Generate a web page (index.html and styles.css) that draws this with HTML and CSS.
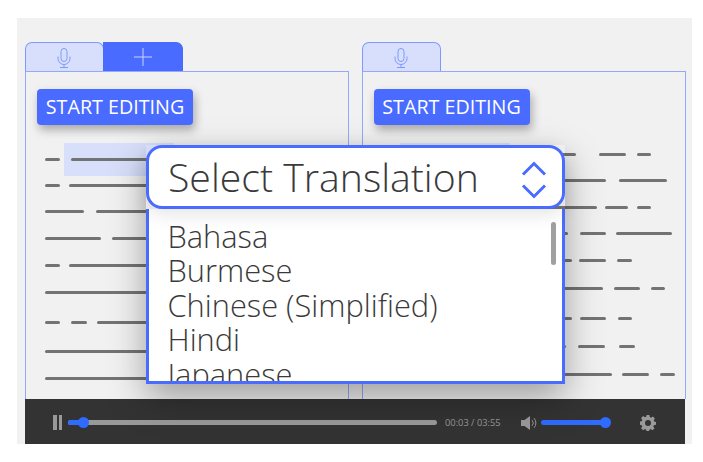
FILE: index.html
```html
<!DOCTYPE html>
<html lang="en">
<head>
<meta charset="utf-8">
<title>Select Translation</title>
<link rel="stylesheet" href="styles.css">
</head>
<body>
<svg class="defs" width="0" height="0" aria-hidden="true">
  <symbol id="mic" viewBox="0 0 14 21">
    <path d="M4 4.500a3 3 0 0 1 6 0v7a3 3 0 0 1-6 0z M1 9.500v2a6 6 0 0 0 12 0v-2 M7 17.500v3 M3 20.500h8" fill="none" stroke="currentColor" stroke-width="1"/>
  </symbol>
</svg>
<main class="stage">
  <div class="panes">
    <section class="pane">
      <div class="tabs">
        <div class="tab"><svg class="mic"><use href="#mic"/></svg></div>
        <div class="tab tab-active">
          <svg class="plus" viewBox="0 0 18 18"><path d="M0 9h18M9 0v18" stroke="currentColor" stroke-width="1"/></svg>
        </div>
      </div>
      <div class="pane-body">
        <div class="hl hl-left"></div>
        <button class="start">START EDITING</button>
        <div class="lines lines-left">
          <div class="line"><i style="width:15px"></i><i style="width:150px;margin-left:11px"></i></div>
          <div class="line r26"><i style="width:15px"></i><i style="width:150px;margin-left:9px"></i></div>
          <div class="line r26"><i style="width:39px"></i><i style="width:120px;margin-left:12px"></i></div>
          <div class="line r27"><i style="width:56px"></i><i style="width:110px;margin-left:11px"></i></div>
          <div class="line r27"><i style="width:15px"></i><i style="width:150px;margin-left:9px"></i></div>
          <div class="line r27"><i style="width:180px"></i></div>
          <div class="line r30"><i style="width:15px"></i><i style="width:16px;margin-left:11px"></i><i style="width:120px;margin-left:10px"></i></div>
          <div class="line r29"><i style="width:180px"></i></div>
          <div class="line r27"><i style="width:180px"></i></div>
        </div>
      </div>
    </section>
    <section class="pane">
      <div class="tabs">
        <div class="tab"><svg class="mic"><use href="#mic"/></svg></div>
      </div>
      <div class="pane-body">
        <div class="hl hl-right"></div>
        <button class="start">START EDITING</button>
        <div class="lines lines-right">
          <div class="line"><i style="width:194px"></i><i style="width:27px;margin-left:23px"></i><i style="width:14px;margin-left:11px"></i></div>
          <div class="line r26"><i style="width:224px"></i><i style="width:48px;margin-left:13px"></i></div>
          <div class="line r27"><i style="width:215px"></i><i style="width:23px;margin-left:8px"></i><i style="width:14px;margin-left:9px"></i></div>
          <div class="line r26"><i style="width:186px"></i><i style="width:26px;margin-left:12px"></i><i style="width:56px;margin-left:10px"></i></div>
          <div class="line r27"><i style="width:190px"></i><i style="width:27px;margin-left:7px"></i><i style="width:15px;margin-left:11px"></i></div>
          <div class="line r28"><i style="width:221px"></i><i style="width:26px;margin-left:11px"></i><i style="width:14px;margin-left:11px"></i></div>
          <div class="line r30"><i style="width:190px"></i><i style="width:26px;margin-left:8px"></i><i style="width:14px;margin-left:12px"></i></div>
          <div class="line r28"><i style="width:184px"></i><i style="width:27px;margin-left:12px"></i><i style="width:16px;margin-left:14px"></i></div>
          <div class="line r28"><i style="width:230px"></i><i style="width:27px;margin-left:10px"></i><i style="width:15px;margin-left:11px"></i></div>
        </div>
      </div>
    </section>
  </div>
  <footer class="player">
    <div class="pause"><i></i><i></i></div>
    <div class="track">
      <div class="track-fill"></div>
    </div>
    <span class="time">00:03 / 03:55</span>
    <svg class="speaker" viewBox="0 0 17 16">
      <path d="M0 5h3.500L9 1v14l-5.500-4H0z" fill="#9a9a9a"/>
      <path d="M11 5.200a4 4 0 0 1 0 5.600M13 3.200a7 7 0 0 1 0 9.600" fill="none" stroke="#9a9a9a" stroke-width="1"/>
    </svg>
    <div class="volume"></div>
    <svg class="gear" viewBox="0 0 16 16">
      <path fill="#9a9a9a" fill-rule="evenodd" d="M6.600 0h2.800l.4 2.100 1.300.6 1.800-1.200 2 2-1.200 1.800.6 1.300 1.700.4v2.800l-2.100.4-.6 1.300 1.200 1.800-2 2-1.800-1.200-1.300.6-.4 2.100H6.600l-.4-2.100-1.300-.6-1.800 1.200-2-2 1.200-1.800-.6-1.300L0 9.800V6.600l1.700-.4.600-1.300-1.200-1.800 2-2 1.800 1.200 1.300-.6zM8 5a3 3 0 1 0 0 6 3 3 0 0 0 0-6z"/>
    </svg>
  </footer>
  <div class="picker">
    <div class="picker-head">
      <span class="picker-title">Select Translation</span>
      <svg class="chevrons" viewBox="0 0 26 38">
        <path d="M2 13.500L13 2.500l11 11M2 24.500l11 11 11-11" fill="none" stroke="currentColor" stroke-width="3"/>
      </svg>
    </div>
    <div class="picker-list">
      <ul class="options">
        <li>Bahasa</li>
        <li>Burmese</li>
        <li>Chinese (Simplified)</li>
        <li>Hindi</li>
        <li>Japanese</li>
      </ul>
      <div class="thumb"></div>
    </div>
  </div>
</main>
</body>
</html>
```
FILE: styles.css
```css
* { box-sizing: border-box; }
html, body { margin: 0; background: #fff; }
body { width: 703px; height: 462px; overflow: hidden; font-family: "Open Sans", sans-serif; }
.defs { position: absolute; }
.stage {
  position: relative;
  margin: 18px 0 0 17px;
  width: 675px;
  height: 426px;
  padding: 24px 6px 0 8px;
  background: #f1f1f1;
  display: flex;
  flex-direction: column;
  overflow: hidden;
}
.panes { display: flex; gap: 12.500px; height: 357px; }
.pane { width: 324px; display: flex; flex-direction: column; }
.tabs { display: flex; height: 29px; flex: none; }
.tab {
  width: 79px;
  height: 29px;
  border: 1px solid #7f98ff;
  border-bottom: 0;
  border-radius: 7px 7px 0 0;
  background: #d7dffd;
  color: #7f98ff;
  display: flex;
  justify-content: center;
  padding: 4px 1px 0 0;
}
.tab-active {
  width: 80px;
  margin-left: -1px;
  background: #4a6bff;
  border-color: #4a6bff;
  border-top-left-radius: 0;
  color: #c9d4ff;
  padding: 5px 0 0;
}
.mic { width: 14px; height: 21px; }
.plus { width: 18px; height: 18px; }
.pane-body {
  position: relative;
  flex: 1;
  border: 1px solid #93a9ff;
  border-bottom: 0;
  padding: 17px 0 0 11px;
}
.hl { position: absolute; top: 71px; width: 110px; height: 33px; background: #d7dffa; }
.hl-left { left: 38px; }
.hl-right { left: 37px; }
.start {
  position: relative;
  display: block;
  width: 156px;
  height: 36px;
  padding: 0;
  border: 0;
  border-radius: 4px;
  background: #4a6bff;
  color: #fff;
  font: 400 19.700px/36px "Open Sans", sans-serif;
  box-shadow: 2px 5px 10px rgba(0, 0, 0, .3);
}
.lines { position: relative; margin-left: 8px; }
.lines-left { padding-top: 33px; }
.lines-right { padding-top: 28px; }
.line { display: flex; height: 3px; }
.line i { display: block; height: 3px; background: #737373; border-radius: 1.500px; flex: none; }
.r26 { margin-top: 23px; }
.r27 { margin-top: 24px; }
.r28 { margin-top: 25px; }
.r29 { margin-top: 26px; }
.r30 { margin-top: 27px; }
.player {
  width: 660px;
  height: 45px;
  flex: none;
  background: #333;
  display: flex;
  align-items: center;
  padding: 2px 0 0 28px;
}
.pause { display: flex; gap: 2px; }
.pause i { display: block; width: 3.500px; height: 15px; background: #999; }
.track {
  position: relative;
  margin-left: 6px;
  width: 369px;
  height: 5px;
  border-radius: 3px;
  background: #999;
}
.track-fill {
  position: absolute;
  left: 0;
  top: 0;
  width: 16px;
  height: 5px;
  border-radius: 3px;
  background: #2f6bff;
}
.track-fill::after, .volume::after {
  content: "";
  position: absolute;
  right: -5px;
  top: -3px;
  width: 11px;
  height: 11px;
  border-radius: 50%;
  background: #2f6bff;
}
.time { margin-left: 8px; width: 56px; font-size: 9.300px; line-height: 12px; color: #999; white-space: nowrap; }
.speaker { margin-left: 20px; width: 17px; height: 16px; }
.volume {
  position: relative;
  margin-left: 3px;
  width: 65px;
  height: 5px;
  border-radius: 3px;
  background: #2f6bff;
}
.gear { margin-left: 34px; width: 16px; height: 16px; }
.picker {
  position: absolute;
  left: 129px;
  top: 127px;
  width: 419px;
  height: 239px;
  box-shadow: 0 14px 34px rgba(0, 0, 0, .34);
}
.picker-head {
  position: relative;
  z-index: 1;
  height: 64px;
  border: 3px solid #4a6bff;
  border-radius: 16px;
  background: #fff;
  display: flex;
  align-items: center;
  justify-content: space-between;
  padding: 0 15px 0 19px;
  box-shadow: 0 6px 18px rgba(0, 0, 0, .1);
}
.picker-title { font-weight: 300; font-size: 39.200px; line-height: 50px; color: #3a3a3a; white-space: nowrap; }
.chevrons { width: 26px; height: 38px; color: #4a6bff; margin-top: 6px; }
.picker-list {
  position: relative;
  height: 175px;
  border: 3px solid #4a6bff;
  border-top: 0;
  background: #fff;
  overflow: hidden;
}
.options {
  list-style: none;
  margin: 0;
  padding: 10px 0 0 18.500px;
  font-weight: 300;
  font-size: 30.800px;
  line-height: 34.400px;
  color: #3a3a3a;
  white-space: nowrap;
  height: 172px;
  overflow: hidden;
}
.thumb {
  position: absolute;
  right: 6px;
  top: 13px;
  width: 5px;
  height: 43px;
  border-radius: 3px;
  background: #a0a0a0;
}
```
